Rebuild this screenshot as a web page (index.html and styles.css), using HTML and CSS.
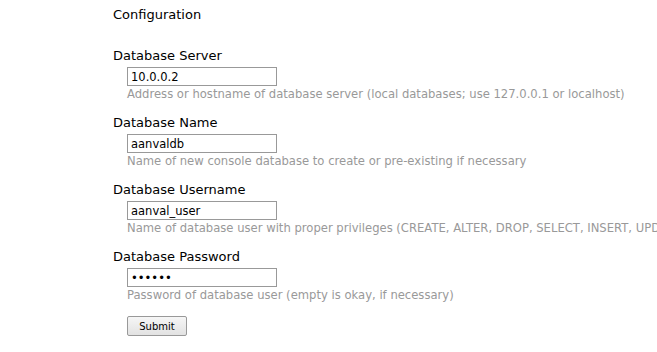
FILE: index.html
```html
<!DOCTYPE html>
<html lang="en">
<head>
    <meta charset="UTF-8">
    <title>Configuration</title>
    <link rel="stylesheet" href="styles.css">
</head>
<body>
    <div class="page">
        <h1>Configuration</h1>

        <form class="config">
            <div class="form-group">
                <label for="server">Database Server</label>
                <input type="text" id="server" value="10.0.0.2">
                <div class="help">Address or hostname of database server (local databases; use 127.0.0.1 or localhost)</div>
            </div>

            <div class="form-group">
                <label for="dbname">Database Name</label>
                <input type="text" id="dbname" value="aanvaldb">
                <div class="help">Name of new console database to create or pre-existing if necessary</div>
            </div>

            <div class="form-group">
                <label for="dbuser">Database Username</label>
                <input type="text" id="dbuser" value="aanval_user">
                <div class="help">Name of database user with proper privileges (CREATE, ALTER, DROP, SELECT, INSERT, UPDATE, DELETE)</div>
            </div>

            <div class="form-group">
                <label for="dbpass">Database Password</label>
                <input type="password" id="dbpass" value="secret">
                <div class="help">Password of database user (empty is okay, if necessary)</div>
            </div>

            <button type="submit">Submit</button>
        </form>
    </div>
</body>
</html>
```

FILE: styles.css
```css
body { margin: 0; font-family: "DejaVu Sans", sans-serif; color: #000; background: #fff; overflow: hidden; }
.page { padding: 7px 0 0 113px; white-space: nowrap; }
h1 { font-size: 13px; font-weight: normal; line-height: 15px; margin: 0 0 26px; }
.form-group { margin-bottom: 13px; }
.form-group label { display: block; font-size: 13px; line-height: 15px; margin-bottom: 4px; }
.form-group input { display: block; box-sizing: border-box; width: 150px; height: 19px; margin: 0 0 0 14px; padding: 0 3px; border: 1px solid #999; font-family: "DejaVu Sans", sans-serif; font-size: 11.5px; color: #000; background: #fff; }
.help { font-size: 11.6px; line-height: 15px; color: #999; margin: 1px 0 0 14px; }
button { display: block; margin: 2px 0 0 14px; width: 60px; height: 20px; padding: 0; font-family: "DejaVu Sans", sans-serif; font-size: 10px; color: #000; background: linear-gradient(#f6f6f6, #e2e2e2); border: 1px solid #999; border-radius: 2px; }
```
